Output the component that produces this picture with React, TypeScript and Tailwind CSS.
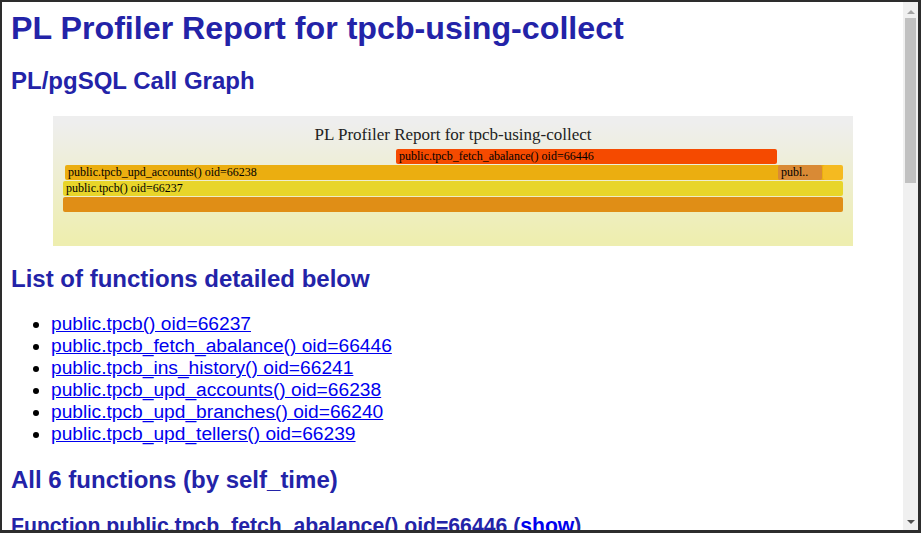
import React from "react";

const FUNCS = [
  "public.tpcb() oid=66237",
  "public.tpcb_fetch_abalance() oid=66446",
  "public.tpcb_ins_history() oid=66241",
  "public.tpcb_upd_accounts() oid=66238",
  "public.tpcb_upd_branches() oid=66240",
  "public.tpcb_upd_tellers() oid=66239",
];

type Frame = { x: number; y: number; w: number; fill: string; label?: string };

const FRAMES: Frame[] = [
  { x: 10, y: 81, w: 780, fill: "#e08e16" },
  { x: 10, y: 65, w: 780, fill: "#e8d52a", label: "public.tpcb() oid=66237" },
  { x: 12, y: 49, w: 765, fill: "#ebae10", label: "public.tpcb_upd_accounts() oid=66238" },
  { x: 725, y: 49, w: 44, fill: "#d98a35", label: "publ.." },
  { x: 770, y: 49, w: 20, fill: "#f5ba20" },
  { x: 343, y: 33, w: 381, fill: "#f54a00", label: "public.tpcb_fetch_abalance() oid=66446" },
];

function FlameGraph() {
  return (
    <svg width={800} height={130} viewBox="0 0 800 130" className="block">
      <defs>
        <linearGradient id="bg" x1="0" y1="0" x2="0" y2="1">
          <stop offset="5%" stopColor="#eeeeee" />
          <stop offset="95%" stopColor="#eeeeb0" />
        </linearGradient>
      </defs>
      <rect x={0} y={0} width={800} height={130} fill="url(#bg)" />
      <text
        x={400}
        y={24}
        textAnchor="middle"
        fontSize={17}
        fontFamily="'Liberation Serif', serif"
        fill="#222"
      >
        PL Profiler Report for tpcb-using-collect
      </text>
      {FRAMES.map((f, i) => (
        <g key={i}>
          <rect x={f.x} y={f.y} width={f.w} height={15} rx={2} ry={2} fill={f.fill} />
          {f.label && (
            <text
              x={f.x + 3}
              y={f.y + 10.7}
              fontSize={12}
              fontFamily="'Liberation Serif', serif"
              fill="#000"
            >
              {f.label}
            </text>
          )}
        </g>
      ))}
    </svg>
  );
}

function Scrollbar() {
  return (
    <div className="flex w-[15px] shrink-0 flex-col items-center bg-[#f0f0f0]">
      <div className="mt-[8px] h-0 w-0 border-x-[4px] border-b-[4px] border-x-transparent border-b-[#a3a3a3]" />
      <div className="mt-[4px] h-[165px] w-[11px] bg-[#c1c1c1]" />
      <div className="flex-1" />
      <div className="mb-[6px] h-0 w-0 border-x-[4px] border-t-[4px] border-x-transparent border-t-[#505050]" />
    </div>
  );
}

export default function App() {
  return (
    <div className="flex h-[533px] w-[921px] overflow-hidden border-b-[3px] border-l-2 border-r-[3px] border-t-2 border-[#2d2d2d] bg-white font-['Liberation_Sans',Arial,sans-serif]">
      <div className="flex min-w-0 flex-1 flex-col overflow-hidden pl-[9px] pr-2 pt-2 text-[#2323a8]">
        <h1 className="text-[32.2px] font-bold leading-[37px]">
          PL Profiler Report for tpcb-using-collect
        </h1>
        <h2 className="mt-5 text-[24px] font-bold leading-[28px]">PL/pgSQL Call Graph</h2>
        <div className="mt-[21px] flex justify-center">
          <FlameGraph />
        </div>
        <h2 className="mt-[19px] text-[24px] font-bold leading-[28px]">
          List of functions detailed below
        </h2>
        <ul className="mt-[20px] list-disc pl-10 text-[19.2px] leading-[22px] text-black">
          {FUNCS.map((f) => (
            <li key={f}>
              <a href="#" className="text-[#0000ee] underline">
                {f}
              </a>
            </li>
          ))}
        </ul>
        <h2 className="mt-[21px] text-[24px] font-bold leading-[28px]">
          All 6 functions (by self_time)
        </h2>
        <h3 className="mt-5 shrink-0 whitespace-nowrap text-[21.2px] font-bold leading-[24px]">
          Function public.tpcb_fetch_abalance() oid=66446 (
          <a href="#" className="text-[#0000ee] underline">
            show
          </a>
          )
        </h3>
      </div>
      <Scrollbar />
    </div>
  );
}
